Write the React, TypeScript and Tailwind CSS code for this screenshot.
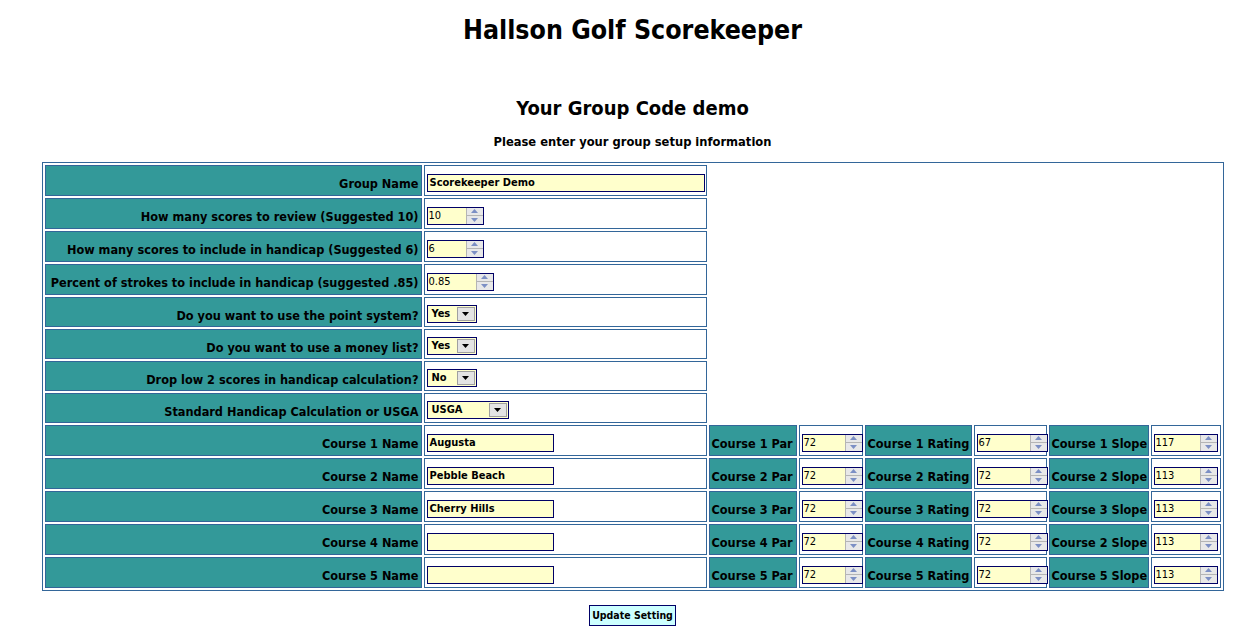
import type { ReactNode } from 'react'

function Spin({ value, w }: { value: string; w: string }) {
  return (
    <div className={'flex h-[18px] items-stretch border border-[#000066] bg-[#ffffcc] ' + w}>
      <div className="flex-1 pl-[1px] text-[11px] leading-[16px] text-black">{value}</div>
      <div className="flex w-[17px] flex-col border-l border-[#b5b5b5] bg-[#e8e8e8]">
        <div className="flex flex-1 items-center justify-center border-b border-[#b5b5b5]">
          <svg width="7" height="4" viewBox="0 0 7 4">
            <path d="M0 4 L3.5 0 L7 4 Z" fill="#7c8fc4" />
          </svg>
        </div>
        <div className="flex flex-1 items-center justify-center">
          <svg width="7" height="4" viewBox="0 0 7 4">
            <path d="M0 0 L3.5 4 L7 0 Z" fill="#7c8fc4" />
          </svg>
        </div>
      </div>
    </div>
  )
}

function Text({ value, w }: { value: string; w: string }) {
  return (
    <div
      className={
        'h-[18px] border border-[#000066] bg-[#ffffcc] pl-[2px] text-[11px] font-bold leading-[16px] text-black ' + w
      }
    >
      {value}
    </div>
  )
}

function Select({ value, w }: { value: string; w: string }) {
  return (
    <div className={'flex h-[18px] items-stretch border border-[#000066] bg-[#ffffcc] ' + w}>
      <div className="flex-1 pl-[4px] text-[11px] font-bold leading-[16px] text-black">{value}</div>
      <div className="m-[1px] flex w-[18px] items-center justify-center border border-[#a0a0a0] bg-[#e4e4e4]">
        <svg width="7" height="4" viewBox="0 0 7 4">
          <path d="M0 0 L3.5 4 L7 0 Z" fill="#000" />
        </svg>
      </div>
    </div>
  )
}

const label =
  'border border-[#336699] bg-[#339999] px-[2px] pt-[8px] text-[12.6px] font-bold whitespace-nowrap text-black'
const cell = 'border border-[#336699] bg-white px-[2px] pt-[4px]'

const rows: { label: string; h: string; field: ReactNode }[] = [
  { label: 'Group Name', h: 'h-[31px]', field: <Text value="Scorekeeper Demo" w="w-[278px]" /> },
  { label: 'How many scores to review (Suggested 10)', h: 'h-[31px]', field: <Spin value="10" w="w-[57px]" /> },
  {
    label: 'How many scores to include in handicap (Suggested 6)',
    h: 'h-[31px]',
    field: <Spin value="6" w="w-[57px]" />,
  },
  {
    label: 'Percent of strokes to include in handicap (suggested .85)',
    h: 'h-[31px]',
    field: <Spin value="0.85" w="w-[67px]" />,
  },
  { label: 'Do you want to use the point system?', h: 'h-[30px]', field: <Select value="Yes" w="w-[50px]" /> },
  { label: 'Do you want to use a money list?', h: 'h-[30px]', field: <Select value="Yes" w="w-[50px]" /> },
  { label: 'Drop low 2 scores in handicap calculation?', h: 'h-[30px]', field: <Select value="No" w="w-[50px]" /> },
  { label: 'Standard Handicap Calculation or USGA', h: 'h-[30px]', field: <Select value="USGA" w="w-[82px]" /> },
]

const courses = [
  { n: 1, name: 'Augusta', par: '72', rating: '67', slope: '117', slopeN: 1 },
  { n: 2, name: 'Pebble Beach', par: '72', rating: '72', slope: '113', slopeN: 2 },
  { n: 3, name: 'Cherry Hills', par: '72', rating: '72', slope: '113', slopeN: 3 },
  { n: 4, name: '', par: '72', rating: '72', slope: '113', slopeN: 2 },
  { n: 5, name: '', par: '72', rating: '72', slope: '113', slopeN: 5 },
]

export default function App() {
  return (
    <div className="min-h-screen bg-white pl-[6px] font-['DejaVu_Sans_Condensed','DejaVu_Sans',sans-serif] text-black">
      <h1 className="pt-[13px] text-center text-[26.5px] font-bold leading-[34px]">Hallson Golf Scorekeeper</h1>
      <h2 className="mt-[47px] text-center text-[20px] font-bold leading-[28px]">Your Group Code demo</h2>
      <div className="mt-[12px] text-center text-[12.8px] font-bold leading-[16px]">
        Please enter your group setup information
      </div>
      <table className="mx-auto mt-[12px] w-[1182px] table-fixed border-separate border-spacing-[2px] border border-[#336699]">
        <colgroup>
          <col className="w-[377px]" />
          <col className="w-[283px]" />
          <col className="w-[88px]" />
          <col className="w-[64px]" />
          <col className="w-[107px]" />
          <col className="w-[73px]" />
          <col className="w-[100px]" />
          <col className="w-[70px]" />
        </colgroup>
        <tbody>
          {rows.map((r) => (
            <tr key={r.label} className={r.h}>
              <td className={label + ' text-right'}>{r.label}</td>
              <td className={cell}>{r.field}</td>
            </tr>
          ))}
          {courses.map((c) => (
            <tr key={c.n} className="h-[31px]">
              <td className={label + ' text-right'}>Course {c.n} Name</td>
              <td className={cell}>
                <Text value={c.name} w="w-[127px]" />
              </td>
              <td className={label + ' text-left'}>Course {c.n} Par</td>
              <td className={cell}>
                <Spin value={c.par} w="w-[61px]" />
              </td>
              <td className={label + ' text-left'}>Course {c.n} Rating</td>
              <td className={cell}>
                <Spin value={c.rating} w="w-[71px]" />
              </td>
              <td className={label + ' text-left'}>Course {c.slopeN} Slope</td>
              <td className={cell}>
                <Spin value={c.slope} w="w-[64px]" />
              </td>
            </tr>
          ))}
        </tbody>
      </table>
      <div className="mt-[14px] flex justify-center">
        <button className="h-[21px] border border-[#000066] bg-[#ccffff] px-[2px] text-[10.5px] font-bold leading-[19px] text-black">
          Update Setting
        </button>
      </div>
    </div>
  )
}
